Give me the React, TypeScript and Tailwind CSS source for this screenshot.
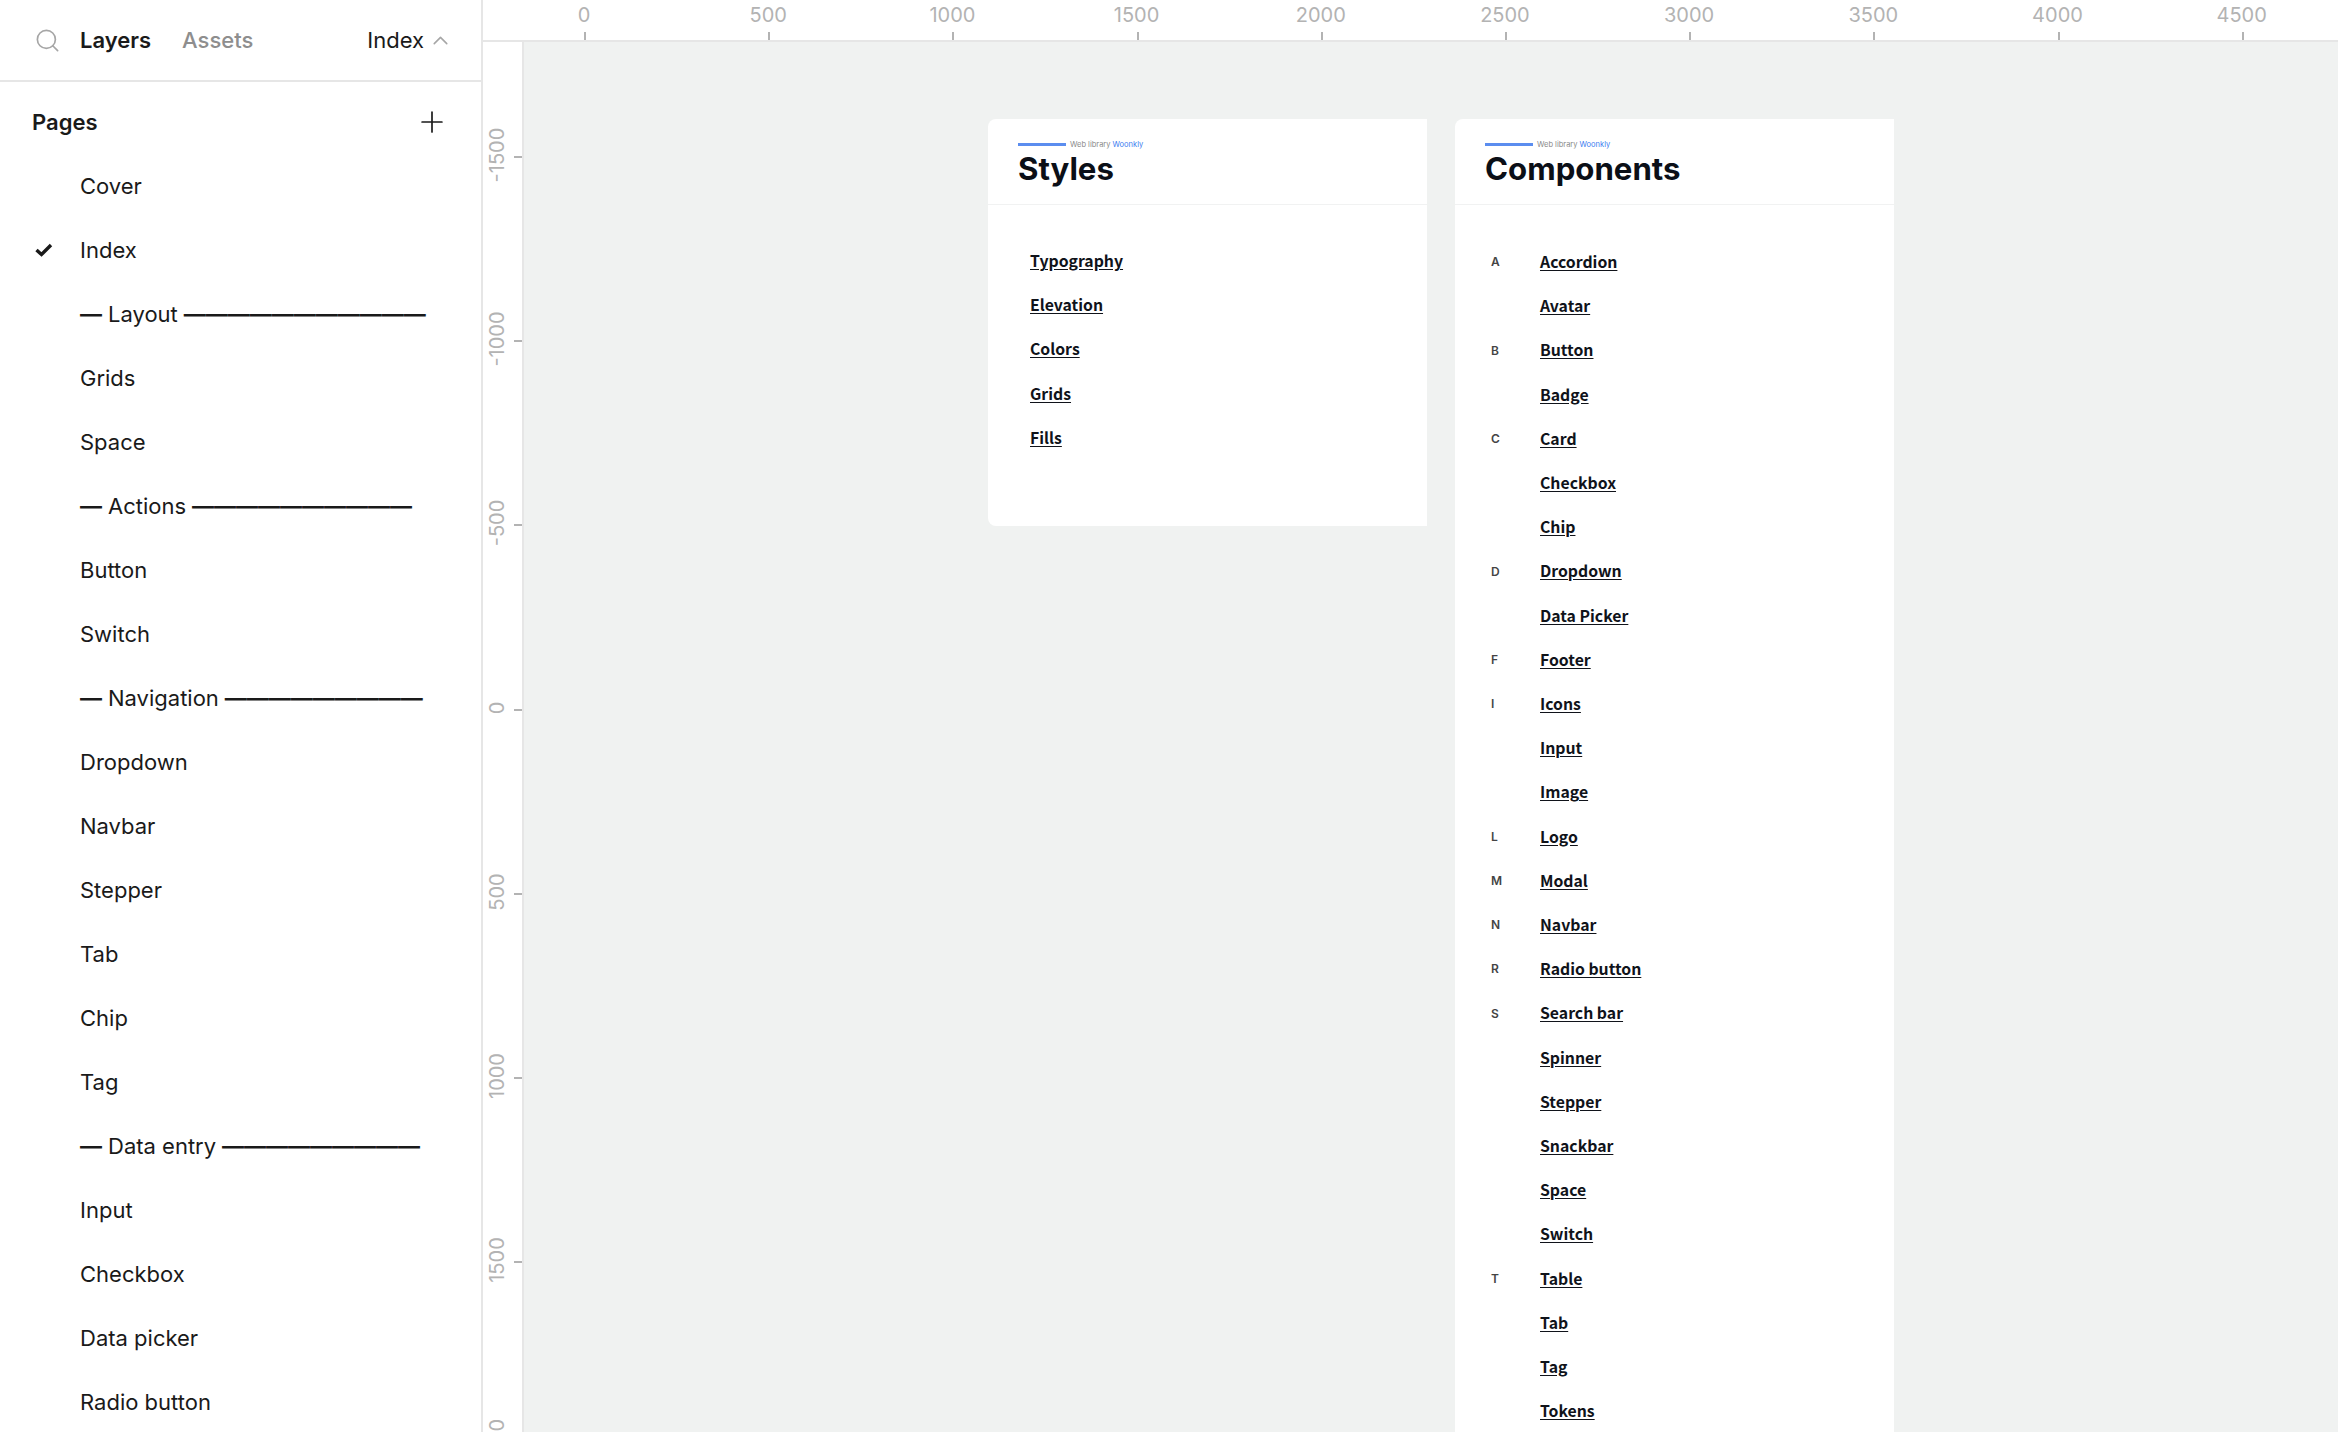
import { Fragment } from "react";
import { Plus, Search, ChevronUp } from "lucide-react";

const pages = [
  "Cover",
  "Index",
  "Grids",
  "Space",
  "Button",
  "Switch",
  "Dropdown",
  "Navbar",
  "Stepper",
  "Tab",
  "Chip",
  "Tag",
  "Input",
  "Checkbox",
  "Data picker",
  "Radio button",
];

// section rows sit between the pages, keyed by the page they come before
const sections: Record<string, [string, string]> = {
  Grids: ["Layout", "———————————"],
  Button: ["Actions", "——————————"],
  Dropdown: ["Navigation", "—————————"],
  Input: ["Data entry", "—————————"],
};

const styleLinks = ["Typography", "Elevation", "Colors", "Grids", "Fills"];

const componentLinks = [
  ["A", "Accordion"],
  ["", "Avatar"],
  ["B", "Button"],
  ["", "Badge"],
  ["C", "Card"],
  ["", "Checkbox"],
  ["", "Chip"],
  ["D", "Dropdown"],
  ["", "Data Picker"],
  ["F", "Footer"],
  ["I", "Icons"],
  ["", "Input"],
  ["", "Image"],
  ["L", "Logo"],
  ["M", "Modal"],
  ["N", "Navbar"],
  ["R", "Radio button"],
  ["S", "Search bar"],
  ["", "Spinner"],
  ["", "Stepper"],
  ["", "Snackbar"],
  ["", "Space"],
  ["", "Switch"],
  ["T", "Table"],
  ["", "Tab"],
  ["", "Tag"],
  ["", "Tokens"],
];

const xMarks = ["0", "500", "1000", "1500", "2000", "2500", "3000", "3500", "4000", "4500"];
const yMarks = ["-1500", "-1000", "-500", "0", "500", "1000", "1500", "2000"];

const linkClass =
  "font-['Noto_Sans_CJK_JP',sans-serif] text-[15.8px] leading-[44.2px] font-bold text-[#10131a] underline underline-offset-2";

function CardHeader({ title }: { title: string }) {
  return (
    <div className="h-[86px] border-b border-[#f1f2f2] pl-[30px] pt-[19px]">
      <div className="flex items-center gap-[4px]">
        <div className="h-[3px] w-[48px] bg-[#5b8def]" />
        <span className="mt-[2px] text-[7.5px] leading-[10px] text-[#8a8a8a]">
          Web library <span className="text-[#3b7cf0]">Woonkly</span>
        </span>
      </div>
      <h2 className="mt-[-1px] text-[31.2px] leading-[40px] font-bold text-[#0b0f17]">{title}</h2>
    </div>
  );
}

function PageRow({ label, active }: { label: string; active?: boolean }) {
  return (
    <li className="flex items-center whitespace-nowrap">
      <span className="flex w-[80px] pl-[35px]">
        {active && (
          <svg width="18" height="14" viewBox="0 0 18 14" fill="none" stroke="currentColor" strokeWidth="3.4">
            <path d="M1.5 7 L6.5 11.5 L16 2" />
          </svg>
        )}
      </span>
      {label}
    </li>
  );
}

export default function App() {
  return (
    <div className="flex h-[1432px] w-[2338px] overflow-hidden bg-white font-['Inter',sans-serif] text-[#1a1a1a]">
      <aside className="h-full w-[483px] shrink-0 border-r-2 border-[#e6e6e6]">
        <div className="flex h-[82px] items-center border-b-2 border-[#e6e6e6] pt-[1px] text-[22px]">
          <Search className="ml-[34px] h-[27px] w-[27px] text-[#a6a6a6]" strokeWidth={1.5} />
          <span className="ml-[19px] font-semibold">Layers</span>
          <span className="ml-[31px] font-medium text-[#8e8e8e]">Assets</span>
          <span className="ml-[114px]">Index</span>
          <ChevronUp className="ml-[4px] h-[25px] w-[25px] text-[#a6a6a6]" strokeWidth={1.5} />
        </div>
        <div className="flex items-center justify-between pl-[32px] pr-[32px] pt-[23px] text-[22px]">
          <span className="font-semibold">Pages</span>
          <Plus className="h-[34px] w-[34px] text-[#1a1a1a]" strokeWidth={1.2} />
        </div>
        <ul className="mt-[15px] text-[22px] leading-[64px]">
          {pages.map((page) => (
            <Fragment key={page}>
              {sections[page] && (
                <li className="flex items-center whitespace-nowrap pl-[80px]">
                  <span className="font-bold">—</span>
                  <span className="mx-[6px]">{sections[page][0]}</span>
                  <span className="font-bold">{sections[page][1]}</span>
                </li>
              )}
              <PageRow label={page} active={page === "Index"} />
            </Fragment>
          ))}
        </ul>
      </aside>

      <main className="flex min-w-0 flex-1 flex-col">
        <div className="flex h-[42px] shrink-0 border-b-2 border-[#e6e6e6] bg-white pl-[41px]">
          <div className="w-[60px] shrink-0" />
          {xMarks.map((mark) => (
            <div key={mark} className="relative h-[40px] w-[184.2px] shrink-0">
              <span className="absolute left-0 top-[3px] w-[80px] -translate-x-[40px] text-center text-[20px] leading-[24px] text-[#b3b3b3]">
                {mark}
              </span>
              <span className="absolute bottom-0 left-0 h-[8px] w-[2px] bg-[#b3b3b3]" />
            </div>
          ))}
        </div>
        <div className="flex min-h-0 flex-1">
          <div className="relative w-[41px] shrink-0 border-r-2 border-[#e6e6e6] bg-white">
            {yMarks.map((mark, i) => (
              <div
                key={mark}
                className="absolute right-0 flex h-[2px] w-[39px] items-center justify-end"
                style={{ top: 114 + i * 184.2 }}
              >
                <span className="absolute left-[-26px] top-[-13px] w-[80px] -rotate-90 text-center text-[20px] leading-[24px] text-[#b3b3b3]">
                  {mark}
                </span>
                <span className="h-[2px] w-[8px] bg-[#b3b3b3]" />
              </div>
            ))}
          </div>
          <div className="flex flex-1 items-start gap-[28px] bg-[#f0f2f1] pl-[464px] pt-[77px]">
            <section className="h-[407px] w-[439px] rounded-l-[8px] bg-white">
              <CardHeader title="Styles" />
              <ul className="pl-[42px] pt-[34px]">
                {styleLinks.map((link) => (
                  <li key={link} className={linkClass}>
                    {link}
                  </li>
                ))}
              </ul>
            </section>
            <section className="w-[439px] rounded-tl-[8px] bg-white">
              <CardHeader title="Components" />
              <ul className="pt-[35px]">
                {componentLinks.map(([letter, link]) => (
                  <li key={link} className="flex items-center">
                    <span className="w-[85px] pl-[36px] text-[12px] font-semibold text-[#444]">{letter}</span>
                    <span className={linkClass}>{link}</span>
                  </li>
                ))}
              </ul>
            </section>
          </div>
        </div>
      </main>
    </div>
  );
}
